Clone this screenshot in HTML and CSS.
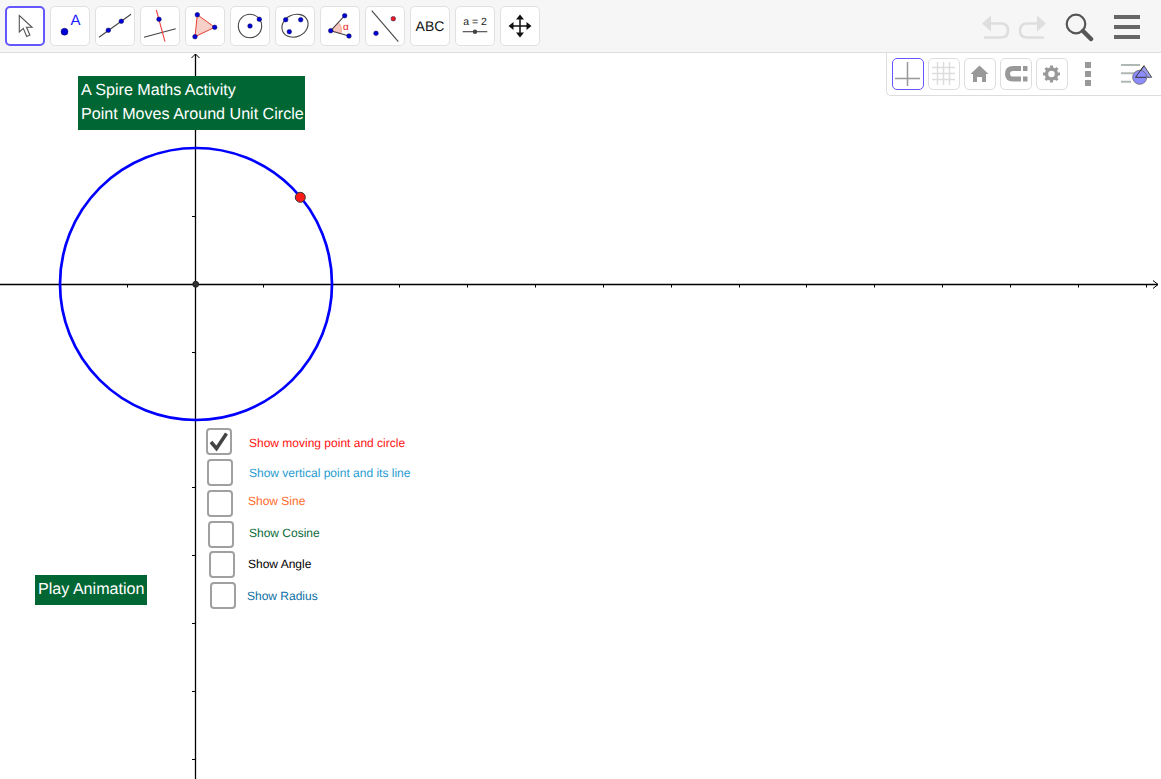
FILE: index.html
```html
<!DOCTYPE html>
<html lang="en">
<head>
<meta charset="utf-8">
<title>Point Moves Around Unit Circle</title>
<link rel="stylesheet" href="styles.css">
</head>
<body>
<div class="app">
  <header class="toolbar">
    <div class="tools">
      <button class="tool selected"><svg viewBox="0 0 40 40"><path class="cursor" d="M14.300 9.500V26l4-3.600 3.400 8 3.200-1.400-3.400-7.700h5.600z"/></svg></button>
      <button class="tool"><svg viewBox="0 0 40 40"><circle class="pt big" cx="14.500" cy="25.700" r="3.500"/><text class="ptlabel" x="20.500" y="19">A</text></svg></button>
      <button class="tool"><svg viewBox="0 0 40 40"><path class="ln" d="M4 31.300 36 8.300"/><circle class="pt" cx="13.300" cy="24.300" r="2.300"/><circle class="pt" cx="26.300" cy="15.300" r="2.300"/></svg></button>
      <button class="tool"><svg viewBox="0 0 40 40"><path class="ln" d="M4 31.300 35.700 22.700"/><path class="ln red" d="M16.300 4 25 35.700"/><circle class="pt" cx="19" cy="13.300" r="2.300"/></svg></button>
      <button class="tool"><svg viewBox="0 0 40 40"><path class="shape" d="M12.300 8.700 29.700 21.300 10 30.700z"/><circle class="pt" cx="12.300" cy="8.700" r="2.300"/><circle class="pt" cx="29.700" cy="21.300" r="2.300"/><circle class="pt" cx="10" cy="30.700" r="2.300"/></svg></button>
      <button class="tool"><svg viewBox="0 0 40 40"><circle class="ln" cx="20" cy="20" r="11.700"/><circle class="pt" cx="20" cy="20" r="2.300"/><circle class="pt" cx="29.300" cy="13.300" r="2.300"/></svg></button>
      <button class="tool"><svg viewBox="0 0 40 40"><ellipse class="ln" cx="20" cy="19.700" rx="13.500" ry="11" transform="rotate(-25 20 19.700)"/><circle class="pt" cx="10.700" cy="13.700" r="2.300"/><circle class="pt" cx="25.700" cy="13.700" r="2.300"/><circle class="pt" cx="14.300" cy="25.700" r="2.300"/></svg></button>
      <button class="tool"><svg viewBox="0 0 40 40"><path class="wedge" d="M10.700 24.700 18.300 16.500Q22.700 21 21 27.700z"/><path class="ln" d="M24.700 9.700 10.700 24.700 29 30"/><circle class="pt" cx="24.700" cy="9.700" r="2.300"/><circle class="pt" cx="10.700" cy="24.700" r="2.300"/><circle class="pt" cx="29" cy="30" r="2.300"/><text class="alpha" x="23" y="23.500">α</text></svg></button>
      <button class="tool"><svg viewBox="0 0 40 40"><path class="ln" d="M6.700 4.700 33.300 35.700"/><circle class="pt redpt" cx="28.300" cy="12.700" r="2.300"/><circle class="pt" cx="11" cy="27.300" r="2.300"/></svg></button>
      <button class="tool text-tool">ABC</button>
      <button class="tool"><svg viewBox="0 0 40 40"><text class="slider-text" x="20" y="19">a = 2</text><path class="ln" d="M7.700 25.700H32.300"/><circle class="pt dark" cx="20" cy="25.700" r="2.200"/></svg></button>
      <button class="tool"><svg viewBox="0 0 40 40"><path class="cross" d="M20 11V29M11 20H29"/><path class="crosshead" d="M20 8.500 24 13.500H16zM20 31.500 24 26.500H16zM8.500 20 13.500 16V24zM31.500 20 26.500 16V24z"/></svg></button>
    </div>
    <div class="actions">
      <svg class="undo" viewBox="0 0 30 26"><path class="hist" d="M4 9.500H20C25 9.500 27 12 27 16.500S25 23.500 20 23.500H3"/><path class="histhead" d="M1 9.500 10 1.500V17.500z"/></svg>
      <svg class="redo" viewBox="0 0 30 26"><path class="hist" d="M26 9.500H10C5 9.500 3 12 3 16.500S5 23.500 10 23.500H27"/><path class="histhead" d="M29 9.500 20 1.500V17.500z"/></svg>
      <svg class="search" viewBox="0 0 30 30"><circle class="lens" cx="12" cy="11" r="9.300"/><path class="handle" d="M19 18 27 26"/></svg>
      <div class="menu"><span></span><span></span><span></span></div>
    </div>
  </header>
  <main class="canvas">
    <svg class="graph" viewBox="0 53 1161 726">
      <path class="axis" d="M0 284.500H1158M195.500 54V779"/>
      <path class="arrow" d="M1153 280.500 1158 284.500 1153 288.500M191.500 58 195.500 54 199.500 58"/>
      <path class="tick" d="M59.500 284.500v3M127.500 284.500v3M263.500 284.500v3M331.500 284.500v3M399.500 284.500v3M467.500 284.500v3M535.500 284.500v3M603.500 284.500v3M671.500 284.500v3M739.500 284.500v3M806.500 284.500v3M874.500 284.500v3M942.500 284.500v3M1010.500 284.500v3M1078.500 284.500v3M1146.500 284.500v3M192 216.500h3M192 148.500h3M192 352.500h3M192 420.500h3M192 487.500h3M192 555.500h3M192 623.500h3M192 691.500h3M192 759.500h3"/>
      <circle class="origin" cx="195.700" cy="284.300" r="3"/>
      <circle class="unit" cx="196" cy="284" r="136"/>
      <circle class="mover" cx="300.300" cy="197.300" r="5"/>
    </svg>
    <div class="note title"><div>A Spire Maths Activity</div><div>Point Moves Around Unit Circle</div></div>
    <div class="note play">Play Animation</div>
    <div class="check c1"><svg viewBox="0 0 23 23"><path class="tickmark" d="M3 12 8.500 18.500 18.500 3.500"/></svg></div>
    <div class="check c2"></div>
    <div class="check c3"></div>
    <div class="check c4"></div>
    <div class="check c5"></div>
    <div class="check c6"></div>
    <span class="label l1">Show moving point and circle</span>
    <span class="label l2">Show vertical point and its line</span>
    <span class="label l3">Show Sine</span>
    <span class="label l4">Show Cosine</span>
    <span class="label l5">Show Angle</span>
    <span class="label l6">Show Radius</span>
    <aside class="stylebar">
      <button class="sb active"><svg viewBox="0 0 32 32"><path class="sbline" d="M15.500 4V28M3 20.500H28"/></svg></button>
      <button class="sb"><svg viewBox="0 0 32 32"><path class="sbgrid" d="M9.500 4V27M15.500 4V27M21.500 4V27M4 9.500H27M4 15.500H27M4 21.500H27"/></svg></button>
      <button class="sb"><svg viewBox="0 0 32 32"><path class="sbfill" d="M15.500 7.500 24.500 16H22V24H18V19H13V24H9V16H6.500z"/></svg></button>
      <button class="sb"><svg viewBox="0 0 32 32"><path class="magnet" d="M21 10.500H13C9 10.500 7.500 12.500 7.500 15.700S9 21 13 21H21"/><path class="magtip" d="M23 8H27.500V13H23zM23 18.500H27.500V23.500H23z"/></svg></button>
      <button class="sb"><svg viewBox="0 0 32 32"><circle class="gear" cx="15.500" cy="16" r="5"/><path class="gearteeth" d="M15.500 7.500V11M15.500 21V24.500M7 16H10.500M20.500 16H24M9.500 10 12 12.500M19 19.500 21.500 22M21.500 10 19 12.500M12 19.500 9.500 22"/></svg></button>
      <div class="dots"><span></span><span></span><span></span></div>
      <svg class="sbmenu" viewBox="0 0 32 26"><path class="sbmlines" d="M0 3H19M0 11.300H13M0 19.700H10"/><path class="sbtri" d="M23 3.700 30.700 15.300H14.500z"/><circle class="sbcirc" cx="18.700" cy="15.300" r="7"/><path class="sbinner" d="M23 3.700 14.500 15.300H25"/></svg>
    </aside>
  </main>
</div>
</body>
</html>
```
FILE: styles.css
```css
* { box-sizing: border-box; }
html, body { margin: 0; height: 100%; overflow: hidden; background: #fff; }
body { font-family: "Liberation Sans", Arial, sans-serif; text-rendering: geometricPrecision; }
.app { display: flex; flex-direction: column; width: 1161px; height: 779px; }

.toolbar {
  flex: 0 0 53px; display: flex; justify-content: space-between; align-items: flex-start;
  background: #f6f6f6; border-bottom: 1px solid #ddd; padding: 6px 0 0 5px;
}
.tools { display: flex; gap: 5px; }
.tool {
  width: 40px; height: 40px; padding: 0; background: #fff; border: 1px solid #e1e1e1;
  border-radius: 5px; font: 14px "Liberation Sans", Arial, sans-serif; color: #111;
  text-rendering: geometricPrecision;
}
.tool svg { display: block; margin: -1px; overflow: visible; width: 40px; height: 40px; }
.tool.selected { border: 2px solid #6557ff; }
.tool.selected svg { margin: -2px; }
.text-tool { font-size: 14px; }
.cursor { fill: #fff; stroke: #555; stroke-width: 1.100; stroke-linejoin: miter; }
.pt { fill: #0000d8; stroke: #0a0a50; stroke-width: .5; }
.redpt { fill: #f01818; }
.dark { fill: #444; stroke: none; }
.ln { fill: none; stroke: #444; stroke-width: 1.100; }
.red { stroke: #f04040; }
.shape { fill: #f6cfc8; stroke: #e84030; stroke-width: 1; }
.wedge { fill: #f8c8c0; stroke: #f08070; stroke-width: .6; }
.ptlabel { font: 15px "Liberation Sans", Arial, sans-serif; fill: #1a1aff; }
.alpha { font: 10px "Liberation Sans", Arial, sans-serif; fill: #e82020; }
.slider-text { font: 10.500px "Liberation Sans", Arial, sans-serif; fill: #222; text-anchor: middle; }
.cross { stroke: #111; stroke-width: 1.500; fill: none; }
.crosshead { fill: #111; }

.actions { display: flex; align-items: flex-start; height: 46px; position: relative; width: 190px; }
.undo, .redo { width: 30px; height: 26px; margin-top: 8px; }
.undo { margin-left: 10px; }
.redo { margin-left: 6px; }
.hist { fill: none; stroke: #dedede; stroke-width: 2.600; }
.histhead { fill: #dedede; }
.search { width: 30px; height: 30px; margin: 7px 0 0 17px; }
.lens { fill: none; stroke: #555; stroke-width: 2.200; }
.handle { stroke: #555; stroke-width: 4.500; stroke-linecap: round; }
.menu { display: flex; flex-direction: column; gap: 6.500px; width: 26px; margin: 9px 0 0 20px; }
.menu span { display: block; height: 3.500px; background: #666; }

.canvas { position: relative; flex: 1; background: #fff; overflow: hidden; }
.graph { position: absolute; left: 0; top: 0; width: 1161px; height: 726px; }
.axis { stroke: #000; stroke-width: 1.300; fill: none; }
.arrow { stroke: #000; stroke-width: 1; fill: none; }
.tick { stroke: #000; stroke-width: 1; fill: none; }
.origin { fill: #333; stroke: #111; stroke-width: .7; }
.unit { fill: none; stroke: #0000ff; stroke-width: 2.700; }
.mover { fill: #ff1a1a; stroke: #333; stroke-width: 1; }

.note { position: absolute; background: #006633; color: #fff; font-size: 16.100px; white-space: nowrap; }
.title { left: 78px; top: 23px; width: 227px; height: 54px; padding: 2px 0 0 3px; line-height: 24px; }
.play { left: 35px; top: 522px; width: 112px; height: 30px; line-height: 29px; padding-left: 3px; }

.check { position: absolute; width: 26px; height: 27px; border: 2px solid #a0a0a0; border-radius: 4px; background: #fff; }
.check svg { display: block; width: 23px; height: 23px; }
.tickmark { fill: none; stroke: #444; stroke-width: 3.500; }
.c1 { left: 206px; top: 375px; }
.c2 { left: 207px; top: 406px; }
.c3 { left: 207px; top: 437px; }
.c4 { left: 208px; top: 468px; }
.c5 { left: 209px; top: 498px; }
.c6 { left: 210px; top: 529px; }

.label { position: absolute; font-size: 12px; line-height: 14px; white-space: nowrap; }
.l1 { left: 249px; top: 383px; color: #ff1010; }
.l2 { left: 249px; top: 413px; color: #1e9bd0; }
.l3 { left: 248px; top: 441px; color: #ff6a28; }
.l4 { left: 249px; top: 473px; color: #0a6b3a; }
.l5 { left: 248px; top: 504px; color: #000; }
.l6 { left: 247px; top: 536px; color: #0b6fa4; }

.stylebar {
  position: absolute; right: 0; top: 0; width: 275px; height: 43px; display: flex; gap: 4px;
  padding: 5px 0 0 5px; background: #fff; border-left: 1px solid #ddd; border-bottom: 1px solid #ddd;
  border-bottom-left-radius: 5px;
}
.sb { width: 32px; height: 32px; padding: 0; background: #fff; border: 1px solid #ddd; border-radius: 5px; }
.sb.active { border-color: #6557ff; }
.sb svg { display: block; width: 32px; height: 32px; margin: -1px; }
.sbline { stroke: #999; stroke-width: 1.500; fill: none; }
.sbgrid { stroke: #ddd; stroke-width: 1.500; fill: none; }
.sbfill { fill: #999; }
.magnet { fill: none; stroke: #999; stroke-width: 5; }
.magtip { fill: #999; }
.gear { fill: none; stroke: #999; stroke-width: 3.500; }
.gearteeth { stroke: #999; stroke-width: 3; }
.dots { display: flex; flex-direction: column; gap: 3px; width: 6px; margin: 4px 0 0 13px; }
.dots span { display: block; width: 6px; height: 6px; background: #999; }
.sbmenu { width: 32px; height: 26px; margin: 4px 0 0 26px; }
.sbmlines { stroke: #b0b8b4; stroke-width: 2; fill: none; }
.sbtri { fill: #9a9aee; stroke: #555; stroke-width: 1; }
.sbcirc { fill: #8c8cff; stroke: #666; stroke-width: .8; }
.sbinner { stroke: #333; stroke-width: 1; fill: none; }
```
